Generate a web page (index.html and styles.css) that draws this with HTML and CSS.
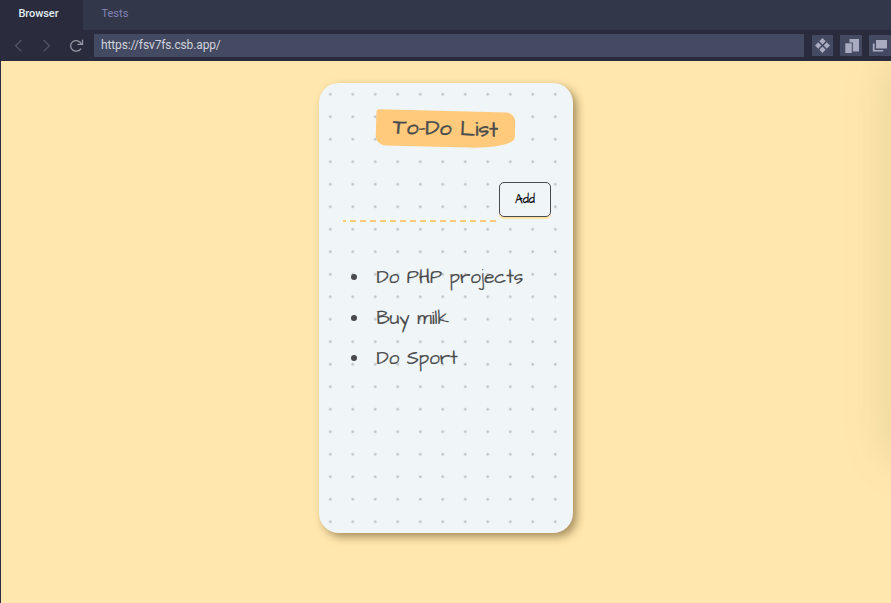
FILE: index.html
```html
<!DOCTYPE html>
<html lang="en">
<head>
<meta charset="utf-8">
<title>To-Do List</title>
<link rel="stylesheet" href="styles.css">
</head>
<body>
<header class="chrome">
  <nav class="tabs"><span class="tab active">Browser</span><span class="tab">Tests</span></nav>
  <div class="toolbar">
    <svg class="nav-icons" width="93" height="31" viewBox="0 0 93 31" fill="none" stroke="#545769" stroke-width="1.2">
      <path d="M21.5 10L15.5 15.7l6 5.7M43.5 10l6 5.7-6 5.7"/>
      <path d="M81.3 13.7A5.6 5.3 0 1 0 81 18.6M82.5 9.7v4.6h-5" stroke="#9698a5" stroke-width="1.3"/>
    </svg>
    <div class="address">https://fsv7fs.csb.app/</div>
    <div class="tools">
      <span class="tool"><svg width="21" height="21" viewBox="0 0 21 21"><path d="M10.5 3l3.2 3.2-3.2 3.2-3.2-3.2zM10.5 11.6l3.2 3.2-3.2 3.2-3.2-3.2zM6.2 7.3l3.2 3.2-3.2 3.2L3 10.5zM14.8 7.3l3.2 3.2-3.2 3.2-3.2-3.2z"/></svg></span>
      <span class="tool"><svg width="22" height="21" viewBox="0 0 22 21"><path d="M9.5 4H19v12.5h-6.2V7.6H9.5zM5.3 8.3h6.5V18H5.3z"/></svg></span>
      <span class="tool"><svg width="22" height="21" viewBox="0 0 22 21"><path d="M7 5h11v8.5H7zM3.8 8.5h1.8v6.4h8.6v1.6H3.8z"/></svg></span>
    </div>
  </div>
</header>
<main class="page">
  <section class="card">
    <h1 class="title"><span>To-Do List</span></h1>
    <form class="form">
      <input class="entry" type="text" aria-label="New item">
      <button class="add" type="button">Add</button>
    </form>
    <ul class="items">
      <li><span>Do PHP projects</span></li>
      <li><span>Buy milk</span></li>
      <li><span>Do Sport</span></li>
    </ul>
  </section>
  <aside class="edge"></aside>
</main>
</body>
</html>
```
FILE: styles.css
```css
* { box-sizing: border-box; }
body {
  margin: 0;
  height: 603px;
  overflow: hidden;
  display: flex;
  flex-direction: column;
  background: #2a2c3d;
  font-family: Roboto, sans-serif;
}
.chrome { height: 61px; flex: none; }
.tabs { display: flex; height: 30px; background: #33374a; }
.tab {
  padding: 0 18px 0 18.5px;
  font-size: 11px;
  line-height: 27px;
  color: #8385b8;
}
.tab.active { width: 83px; background: #2a2c3d; color: #e1edf0; font-weight: 500; letter-spacing: -0.08px; }
.toolbar { display: flex; height: 31px; width: 891px; overflow: hidden; }
.nav-icons { flex: none; margin-right: 1px; }
.address {
  flex: none;
  width: 710px;
  height: 23px;
  margin-top: 4px;
  padding-left: 7px;
  border-radius: 1px;
  background: #434a61;
  color: #d2d3dd;
  font-size: 12px;
  line-height: 22px;
  letter-spacing: -0.13px;
}
.tools { display: flex; gap: 7px; flex: none; padding: 5px 0 0 8px; }
.tool { width: 21px; height: 21px; background: #434a61; border-radius: 1px; }
.tool + .tool { width: 22px; }
.tool svg { display: block; fill: #a9abc1; }

.page {
  position: relative;
  flex: 1;
  margin-left: 1px;
  padding: 22px 0 0 318px;
  overflow: hidden;
  background: #ffe7ae;
}
.card {
  width: 254px;
  height: 450px;
  padding: 28px 22px 0 24px;
  border-radius: 20px;
  background: radial-gradient(circle, #bcc1c6 0.9px, transparent 1.6px) 0 0 / 22.5px 22.5px #f0f5f8;
  box-shadow: 4px 4px 8px rgba(80, 60, 20, 0.5);
  color: #494a4b;
  font-family: "Architects Daughter", "Comic Neue", Lato, sans-serif;
}
.title {
  width: 139px;
  height: 36px;
  margin: 0 0 35px 33px;
  border-radius: 3px 9px 46px 10px / 3px 9px 11px 9px;
  background: #ffca7b;
  transform: rotate(1.5deg);
  font-size: 21.6px;
  font-weight: 500;
  line-height: 36px;
  white-space: nowrap;
  -webkit-text-stroke: 0.4px #494a4b;
}
.title span { padding-left: 17px; }
.form { display: flex; height: 40px; align-items: flex-start; gap: 2px; }
.entry {
  width: 154px;
  height: 40px;
  padding: 0;
  border: 0;
  background: repeating-linear-gradient(90deg, #ffca7b 0 2.5px, transparent 2.5px 6.5px, #ffca7b 6.5px 10px) 0 100% / 100% 2px no-repeat;
  background: repeating-linear-gradient(90deg, #ffca7b 0 3px, transparent 3px 7px, #ffca7b 7px 10px) 0 100% / 100% 2px no-repeat;
  outline: 0;
}
.add {
  width: 52px;
  height: 35px;
  padding: 0;
  border: 1px solid #494a4b;
  border-radius: 5px;
  background: #f0f5f8;
  box-shadow: 0 2px #ffe4aa;
  color: #000;
  font: 500 12px "Architects Daughter", "Comic Neue", Lato, sans-serif;
  -webkit-text-stroke: 0.15px #000;
}
.items {
  margin: 35px 0 0;
  padding: 0;
  list-style: none;
  font-size: 18.75px;
  line-height: 40.5px;
  white-space: nowrap;
}
.items li { display: flex; height: 40.5px; align-items: center; }
.items span { padding-top: 2px; -webkit-text-stroke: 0.15px #494a4b; }
.items li::before {
  content: "";
  width: 6px;
  height: 6px;
  margin: 0 19.5px 0 8px;
  border-radius: 50%;
  background: #494a4b;
}
.edge {
  position: absolute;
  left: 100%;
  top: 4px;
  width: 80px;
  height: 390px;
  box-shadow: 0 0 50px rgba(110, 110, 20, 0.18);
}
```
